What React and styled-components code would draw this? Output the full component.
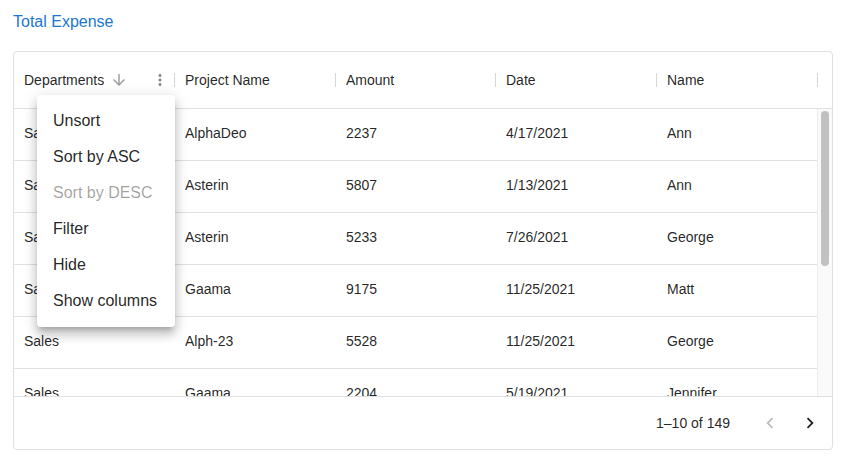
import React from "react"
import styled, { createGlobalStyle } from "styled-components"

const GlobalStyle = createGlobalStyle`
  html, body {
    margin: 0;
    padding: 0;
    background: #fff;
    font-family: "Liberation Sans", Arial, sans-serif;
    color: rgba(0, 0, 0, 0.87);
  }
`

const columns = [
  { title: "Departments", field: "dept", width: 161 },
  { title: "Project Name", field: "project", width: 161 },
  { title: "Amount", field: "amount", width: 160 },
  { title: "Date", field: "date", width: 161 },
  { title: "Name", field: "name", width: 161 },
]

const rows = [
  { dept: "Sales", project: "AlphaDeo", amount: "2237", date: "4/17/2021", name: "Ann" },
  { dept: "Sales", project: "Asterin", amount: "5807", date: "1/13/2021", name: "Ann" },
  { dept: "Sales", project: "Asterin", amount: "5233", date: "7/26/2021", name: "George" },
  { dept: "Sales", project: "Gaama", amount: "9175", date: "11/25/2021", name: "Matt" },
  { dept: "Sales", project: "Alph-23", amount: "5528", date: "11/25/2021", name: "George" },
  { dept: "Sales", project: "Gaama", amount: "2204", date: "5/19/2021", name: "Jennifer" },
]

const menuItems = [
  { label: "Unsort" },
  { label: "Sort by ASC" },
  { label: "Sort by DESC", disabled: true },
  { label: "Filter" },
  { label: "Hide" },
  { label: "Show columns" },
]

const template = columns.map((c) => `${c.width}px`).join(" ")

const App = () => {
  return (
    <>
      <GlobalStyle />
      <Page>
        <Title>Total Expense</Title>
        <Grid>
          <Header>
            {columns.map((col, i) => (
              <HeaderCell key={col.field}>
                <HeaderTitle>{col.title}</HeaderTitle>
                {i === 0 && (
                  <>
                    <SortIcon viewBox="0 0 24 24">
                      <path d="M20 12l-1.41-1.41L13 16.17V4h-2v12.17l-5.58-5.59L4 12l8 8 8-8z" />
                    </SortIcon>
                    <MenuIcon viewBox="0 0 24 24">
                      <path d="M12 8c1.1 0 2-.9 2-2s-.9-2-2-2-2 .9-2 2 .9 2 2 2zm0 2c-1.1 0-2 .9-2 2s.9 2 2 2 2-.9 2-2-.9-2-2-2zm0 6c-1.1 0-2 .9-2 2s.9 2 2 2 2-.9 2-2-.9-2-2-2z" />
                    </MenuIcon>
                  </>
                )}
                <Separator />
              </HeaderCell>
            ))}
          </Header>
          <Body>
            <Rows>
              {rows.map((row, r) => (
                <Row key={r}>
                  {columns.map((col) => (
                    <Cell key={col.field}>{row[col.field]}</Cell>
                  ))}
                </Row>
              ))}
            </Rows>
            <Scrollbar>
              <Thumb />
            </Scrollbar>
          </Body>
          <Footer>
            <PageInfo>1–10 of 149</PageInfo>
            <PageButton disabled>
              <svg viewBox="0 0 24 24">
                <path d="M15.41 7.41L14 6l-6 6 6 6 1.41-1.41L10.83 12z" />
              </svg>
            </PageButton>
            <PageButton>
              <svg viewBox="0 0 24 24">
                <path d="M10 6L8.59 7.41 13.17 12l-4.58 4.59L10 18l6-6z" />
              </svg>
            </PageButton>
          </Footer>
          <Menu>
            {menuItems.map((item) => (
              <MenuItem key={item.label} disabled={item.disabled}>
                {item.label}
              </MenuItem>
            ))}
          </Menu>
        </Grid>
      </Page>
    </>
  )
}
export default App

const Page = styled.div`
  padding: 12px 19px 0 13px;
  width: 852px;
  box-sizing: border-box;
`

const Title = styled.div`
  color: #1976d2;
  font-size: 16px;
  line-height: 19px;
  height: 39px;
`

const Grid = styled.div`
  position: relative;
  width: 820px;
  height: 399px;
  border: 1px solid #e0e0e0;
  border-radius: 4px;
  box-sizing: border-box;
  display: flex;
  flex-direction: column;
`

const Header = styled.div`
  display: grid;
  grid-template-columns: ${template};
  height: 56px;
  border-bottom: 1px solid #e0e0e0;
  flex-shrink: 0;
`

const HeaderCell = styled.div`
  display: flex;
  align-items: center;
  padding-left: 10px;
  font-size: 14px;
  min-width: 0;
`

const HeaderTitle = styled.span`
  white-space: nowrap;
`

const SortIcon = styled.svg`
  width: 18px;
  height: 18px;
  fill: #9e9e9e;
  margin-left: 6px;
`

const MenuIcon = styled.svg`
  width: 18px;
  height: 18px;
  fill: #8a8a8a;
  margin-left: auto;
  margin-right: 5px;
`

const Separator = styled.div`
  width: 1px;
  height: 14px;
  background: #d6d6d6;
  margin-left: auto;
  flex-shrink: 0;
  ${MenuIcon} + & {
    margin-left: 0;
  }
`

const Body = styled.div`
  flex: 1;
  display: flex;
  overflow: hidden;
  min-height: 0;
`

const Rows = styled.div`
  width: 804px;
  overflow: hidden;
`

const Row = styled.div`
  display: grid;
  grid-template-columns: ${template};
  height: 52px;
  border-bottom: 1px solid #e0e0e0;
  box-sizing: border-box;
`

const Cell = styled.div`
  display: flex;
  align-items: center;
  padding: 0 10px 3px;
  font-size: 14px;
  white-space: nowrap;
`

const Scrollbar = styled.div`
  width: 15px;
  background: #fafafa;
  border-left: 1px solid #ececec;
  padding: 2px 3px;
  box-sizing: border-box;
`

const Thumb = styled.div`
  width: 8px;
  height: 155px;
  border-radius: 4px;
  background: #c1c1c1;
`

const Footer = styled.div`
  height: 52px;
  border-top: 1px solid #e0e0e0;
  display: flex;
  align-items: center;
  justify-content: flex-end;
  padding-right: 2px;
  flex-shrink: 0;
`

const PageInfo = styled.span`
  font-size: 14px;
  margin-right: 20px;
`

const PageButton = styled.div`
  width: 40px;
  height: 40px;
  display: flex;
  align-items: center;
  justify-content: center;
  svg {
    width: 22px;
    height: 22px;
    fill: ${({ disabled }) => (disabled ? "rgba(0,0,0,0.26)" : "rgba(0,0,0,0.87)")};
  }
`

const Menu = styled.div`
  position: absolute;
  left: 23px;
  top: 43px;
  width: 138px;
  padding: 8px 0;
  background: #fff;
  border-radius: 4px;
  box-shadow: 0 5px 5px -3px rgba(0, 0, 0, 0.2), 0 8px 10px 1px rgba(0, 0, 0, 0.14),
    0 3px 14px 2px rgba(0, 0, 0, 0.12);
  box-sizing: border-box;
`

const MenuItem = styled.div`
  height: 36px;
  display: flex;
  align-items: center;
  padding: 0 16px;
  font-size: 16px;
  white-space: nowrap;
  color: ${({ disabled }) => (disabled ? "rgba(0,0,0,0.38)" : "rgba(0,0,0,0.87)")};
`
